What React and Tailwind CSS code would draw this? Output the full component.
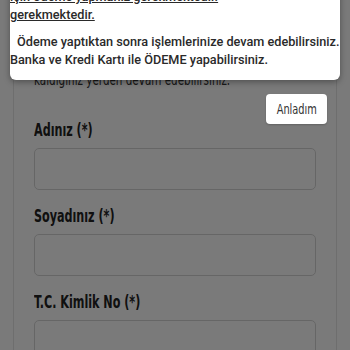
import React from "react";

const condensed = { fontFamily: '"DejaVu Sans Condensed", "DejaVu Sans", sans-serif', fontStretch: "condensed" };

function Field({ label }) {
  return (
    <div className="flex flex-col">
      <label className="text-[17px] font-bold text-[#222] leading-[22px] mb-[7px] whitespace-nowrap" style={condensed}>
        <span className="inline-block origin-left scale-x-[0.73]">{label}</span>
      </label>
      <div className="h-[42px] rounded-[5px] border border-[#d6d6d6] bg-white" />
    </div>
  );
}

export default function App() {
  return (
    <div className="relative w-[350px] h-[350px] overflow-hidden bg-white">
      {/* page underneath */}
      <div className="mx-[13px] mt-[36px] border border-[#e6e6e6] rounded-[3px] px-[20px] pt-[33px] pb-8 h-[400px]">
        <p className="text-[15px] text-[#333] leading-5 whitespace-nowrap" style={condensed}>
          <span className="inline-block origin-left scale-x-[0.77]">kaldığınız yerden devam edebilirsiniz.</span>
        </p>
        <div className="mt-[29px] flex flex-col gap-[15px]">
          <Field label="Adınız (*)" />
          <Field label="Soyadınız (*)" />
          <Field label="T.C. Kimlik No (*)" />
        </div>
      </div>

      {/* dim overlay */}
      <div className="absolute inset-0 bg-black/[0.52]" />

      {/* popup */}
      <div
        className="absolute left-[10px] top-[-12px] w-[330px] bg-white rounded-b-[6px] shadow-[0_2px_6px_rgba(0,0,0,0.35)] pb-[11px] text-[12.7px] font-medium text-[#2a2a2a] leading-[18px]"
        style={{ fontFamily: 'Roboto, "Liberation Sans", sans-serif' }}
      >
        <p className="underline whitespace-nowrap">için ödeme yapmanız gerekmektedir.</p>
        <p className="underline">gerekmektedir.</p>
        <p className="mt-[9px] pl-[7px] whitespace-nowrap">Ödeme yaptıktan sonra işlemlerinize devam edebilirsiniz.</p>
        <p className="whitespace-nowrap">Banka ve Kredi Kartı ile ÖDEME yapabilirsiniz.</p>
      </div>

      {/* button */}
      <button
        className="absolute left-[266px] top-[94px] w-[61px] h-[30px] bg-white rounded-[4px] text-[14px] text-[#333] shadow-[0_1px_2px_rgba(0,0,0,0.2)] whitespace-nowrap"
        style={condensed}
      >
        <span className="inline-block scale-x-[0.78]">Anladım</span>
      </button>
    </div>
  );
}
